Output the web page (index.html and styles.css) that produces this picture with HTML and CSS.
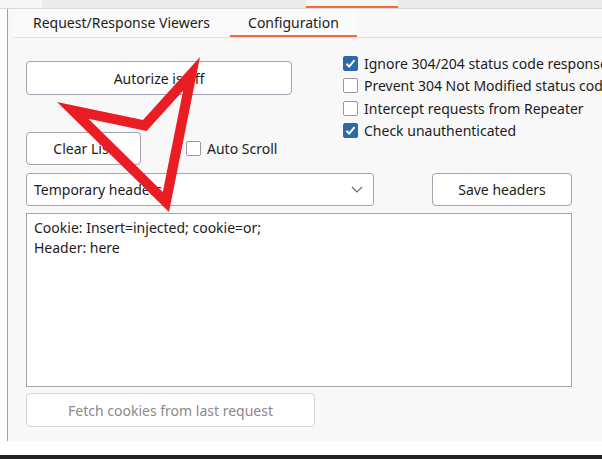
FILE: index.html
```html
<!DOCTYPE html>
<html>
<head>
<meta charset="utf-8">
<link rel="stylesheet" href="styles.css">
</head>
<body>
<div class="topstrip">
  <div class="ts ts0"></div>
  <div class="ts ts1"></div>
  <div class="ts ts2"></div>
  <div class="ts ts3"></div>
</div>
<div class="frame">
  <div class="tabs">
    <div class="tab tab-first">Request/Response Viewers</div>
    <div class="tab active">Configuration</div>
  </div>
  <div class="config">
    <div class="top-row">
      <div class="left-col">
        <div class="btn btn-wide">Autorize is off</div>
        <div class="clear-row">
          <div class="btn btn-clear">Clear List</div>
          <label class="chk"><span class="box"></span><span>Auto Scroll</span></label>
        </div>
      </div>
      <div class="checks">
        <label class="chk"><span class="box on"><svg viewBox="0 0 15 15" width="15" height="15"><path d="M3.5 7.8 L6.2 10.6 L11.5 4.2" fill="none" stroke="#fff" stroke-width="2"/></svg></span><span>Ignore 304/204 status code responses</span></label>
        <label class="chk"><span class="box"></span><span>Prevent 304 Not Modified status code</span></label>
        <label class="chk"><span class="box"></span><span>Intercept requests from Repeater</span></label>
        <label class="chk"><span class="box on"><svg viewBox="0 0 15 15" width="15" height="15"><path d="M3.5 7.8 L6.2 10.6 L11.5 4.2" fill="none" stroke="#fff" stroke-width="2"/></svg></span><span>Check unauthenticated</span></label>
      </div>
    </div>
    <div class="hdr-row">
      <div class="select">
        <span>Temporary headers</span>
        <svg class="chev" viewBox="0 0 12 7" width="12" height="7"><polyline points="1,1 6,6 11,1" fill="none" stroke="#6a6a6a" stroke-width="1.2"/></svg>
      </div>
      <div class="btn btn-save">Save headers</div>
    </div>
    <div class="editor">Cookie: Insert=injected; cookie=or;<br>Header: here</div>
    <div class="btn btn-fetch">Fetch cookies from last request</div>
  </div>
</div>
<div class="bottom-gap"></div>
<div class="darkbar"></div>
<svg class="annot" viewBox="0 0 602 459" width="602" height="459">
  <path fill="#ea1d25" fill-rule="evenodd" d="M200,57 L169,212 L57,102 L143,120 Z M183.1,90.7 L146.6,131 L88.4,118.8 L162.8,191.9 Z"/>
</svg>
</body>
</html>
```
FILE: styles.css
```css
* { box-sizing: border-box; }
html, body { margin: 0; padding: 0; }
body {
  width: 602px;
  height: 459px;
  overflow: hidden;
  background: #ffffff;
  font-family: "Noto Sans", "Open Sans", sans-serif;
  font-size: 14px;
  color: #1c1c1c;
  position: relative;
}
.topstrip {
  display: flex;
  height: 9px;
  border-bottom: 1px solid #d9d9d9;
}
.ts { height: 8px; }
.ts0 { width: 42px; background: #f7f7f7; }
.ts1 { width: 264px; background: #ebebeb; }
.ts2 { width: 92px; background: #f7f7f7; border-bottom: 2px solid #f26b3a; }
.ts3 { flex: 1; background: #ebebeb; }

.frame {
  margin-left: 7px;
  border-left: 1px solid #7ea7d8;
  background: #f8f8f8;
  height: 432px;
}
.tabs {
  display: flex;
  margin-left: 6px;
  height: 29px;
  border-bottom: 1px solid #e0e0e0;
}
.tab {
  height: 28px;
  line-height: 27px;
  padding: 0 18px;
  background: #fafafa;
  white-space: nowrap;
}
.tab-first { padding: 0 20px 0 19px; }
.tab.active {
  border-bottom: 2px solid #f26b3a;
}
.config {
  padding: 14px 30px 0 18px;
}
.top-row {
  display: flex;
  height: 113px;
}
.left-col {
  flex: none;
  width: 266px;
  padding-top: 9px;
  display: flex;
  flex-direction: column;
  gap: 37px;
}
.btn {
  background: #ffffff;
  border: 1px solid #a3a3b2;
  border-radius: 4px;
  display: flex;
  align-items: center;
  justify-content: center;
  white-space: nowrap;
}
.btn-wide { height: 34px; }
.clear-row {
  display: flex;
  align-items: center;
  gap: 45px;
}
.btn-clear { width: 115px; height: 33px; }
.chk {
  display: flex;
  align-items: center;
  gap: 6px;
  white-space: nowrap;
}
.box {
  width: 15px;
  height: 15px;
  border: 1px solid #9a9a9a;
  border-radius: 2px;
  background: #fff;
  flex: none;
  display: block;
}
.box.on {
  background: #2f68a8;
  border-color: #2f68a8;
}
.box svg { display: block; margin: -1px; }
.checks {
  margin-left: 51px;
  display: flex;
  flex-direction: column;
}
.checks .chk { height: 22.5px; }
.hdr-row {
  margin-top: 8px;
  display: flex;
  justify-content: space-between;
  height: 33px;
}
.select {
  width: 348px;
  height: 33px;
  background: #fff;
  border: 1px solid #a3a3b2;
  border-radius: 3px;
  display: flex;
  align-items: center;
  justify-content: space-between;
  padding: 0 10px 0 7px;
}
.chev { display: block; }
.btn-save { width: 140px; height: 33px; }
.editor {
  margin-top: 7px;
  height: 174px;
  background: #fff;
  border: 1px solid #a3a3b2;
  padding: 4px 7px;
  line-height: 20px;
}
.btn-fetch {
  margin-top: 6px;
  width: 289px;
  height: 34px;
  border-color: #d4d4d8;
  color: #8a8a8a;
}
.bottom-gap { height: 14px; }
.darkbar {
  height: 4px;
  background: #222222;
}
.annot {
  position: absolute;
  left: 0;
  top: 0;
  pointer-events: none;
}
```
